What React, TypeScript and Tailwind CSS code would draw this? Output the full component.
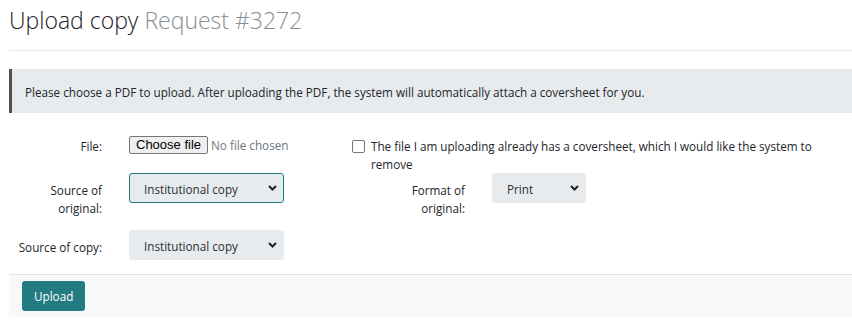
import React from 'react';

function Chevron() {
  return (
    <svg width="9" height="6" viewBox="0 0 9 6" className="shrink-0">
      <path d="M1 1l3.5 3.5L8 1" fill="none" stroke="#1f2326" strokeWidth="2" />
    </svg>
  );
}

function FakeSelect({ value, width, focused }: { value: string; width: string; focused?: boolean }) {
  return (
    <div
      className={`flex h-[30px] items-center justify-between rounded-[3px] bg-[#e8ebee] pt-[2px] text-[11.7px] text-[#2b2f33] ${width} ${
        focused ? 'border border-[#1f7a80] pl-[14px] pr-[6px]' : 'pl-[15px] pr-[7px]'
      }`}
    >
      <span>{value}</span>
      <span className="-mt-[2px]">
        <Chevron />
      </span>
    </div>
  );
}

export default function App() {
  return (
    <div className="min-h-[322px] bg-white pl-[9px] font-['Open_Sans',sans-serif] text-[11.7px] text-[#212529]">
      <header className="h-[51px] border-b border-[#e7e9ec] pt-[6px]">
        <h1 className="text-[23px] font-light leading-[29px] text-[#1d2124]">
          Upload copy <span className="text-[#868e96]">Request #3272</span>
        </h1>
      </header>

      <div className="mt-[18px] border-l-[3px] border-[#4d5157] bg-[#e8ebee] pb-[11px] pl-[13px] pt-[13px] leading-[20px]">
        Please choose a PDF to upload. After uploading the PDF, the system will automatically attach a coversheet for
        you.
      </div>

      <form className="mt-[23px]">
        <div className="grid grid-cols-[343px_1fr] leading-[18px]">
          <div className="flex h-[37px] items-start">
            <label className="w-[93px] pt-[1px] text-right">File:</label>
            <div className="ml-[27px] flex items-start">
              <button
                type="button"
                className="h-[18px] rounded-[2px] border border-[#767676] bg-[#efefef] px-[6px] font-['Liberation_Sans',Arial,sans-serif] text-[13px] leading-[16px] text-black"
              >
                Choose file
              </button>
              <span className="ml-[3px] text-[#6c757d]">No file chosen</span>
            </div>
          </div>
          <div className="mt-[1px] flex h-[36px] items-start pr-[20px]">
            <span className="mt-[3px] h-[13px] w-[13px] shrink-0 rounded-[2px] border border-[#767676] bg-white" />
            <span className="ml-[6px]">
              The file I am uploading already has a coversheet, which I would like the system to remove
            </span>
          </div>

          <div className="flex h-[43px] items-start">
            <label className="w-[93px] pt-[8px] text-right">
              Source of original:
            </label>
            <div className="ml-[27px]">
              <FakeSelect value="Institutional copy" width="w-[155px]" focused />
            </div>
          </div>
          <div className="flex items-start">
            <label className="ml-[20px] w-[93px] pt-[8px] text-right">Format of original:</label>
            <div className="ml-[27px]">
              <FakeSelect value="Print" width="w-[94px]" />
            </div>
          </div>

          <div className="mt-[13px] flex items-start">
            <label className="w-[93px] pt-[8px] text-right">Source of copy:</label>
            <div className="ml-[27px]">
              <FakeSelect value="Institutional copy" width="w-[155px]" />
            </div>
          </div>
          <div />
        </div>

        <div className="mt-[14px] border-t border-[#e3e6e9] bg-[#f7f8f9] py-[6px] pl-[13px]">
          <button
            type="button"
            className="h-[30px] rounded-[3px] bg-[#237b82] px-[12px] pt-[1px] text-[11.7px] text-white"
          >
            Upload
          </button>
        </div>
      </form>
    </div>
  );
}
